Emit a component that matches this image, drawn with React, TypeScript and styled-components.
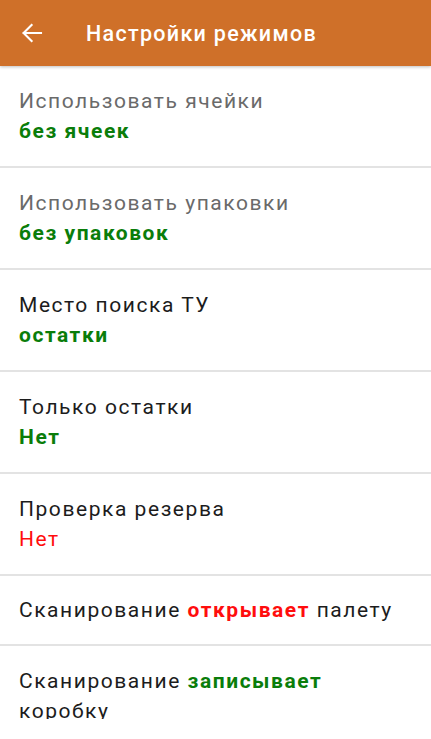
import { FC } from 'react';
import styled, { createGlobalStyle } from 'styled-components';

type Tone = 'green' | 'greenBold' | 'red';

type Setting = {
  label: string;
  value: string;
  tone: Tone;
  disabled?: boolean;
};

const settings: Setting[] = [
  { label: 'Использовать ячейки', value: 'без ячеек', tone: 'greenBold', disabled: true },
  { label: 'Использовать упаковки', value: 'без упаковок', tone: 'greenBold', disabled: true },
  { label: 'Место поиска ТУ', value: 'остатки', tone: 'greenBold' },
  { label: 'Только остатки', value: 'Нет', tone: 'greenBold' },
  { label: 'Проверка резерва', value: 'Нет', tone: 'red' },
];

const App: FC = () => {
  return (
    <>
      <GlobalStyle />
      <StyledScreen>
        <StyledToolbar>
          <StyledBackButton aria-label="Назад">
            <svg width="24" height="24" viewBox="0 0 24 24" fill="none">
              <path
                d="M21 12H3.6M11.6 4L3.6 12L11.6 20"
                stroke="#fff"
                strokeWidth="2.1"
                strokeLinecap="square"
              />
            </svg>
          </StyledBackButton>
          <StyledTitle>Настройки режимов</StyledTitle>
        </StyledToolbar>

        <StyledList>
          {settings.map((item) => (
            <StyledRow key={item.label}>
              <StyledLabel $disabled={item.disabled}>{item.label}</StyledLabel>
              <StyledValue $tone={item.tone}>{item.value}</StyledValue>
            </StyledRow>
          ))}
          <StyledRow $compact>
            <StyledLabel>
              Сканирование <StyledInline $tone="red">открывает</StyledInline> палету
            </StyledLabel>
          </StyledRow>
          <StyledRow>
            <StyledLabel>
              Сканирование <StyledInline $tone="green">записывает</StyledInline> коробку
            </StyledLabel>
          </StyledRow>
        </StyledList>
      </StyledScreen>
    </>
  );
};

export default App;

const GlobalStyle = createGlobalStyle`
  html, body {
    margin: 0;
    padding: 0;
    background: #fff;
  }
  body {
    font-family: Roboto, 'Noto Sans', 'Liberation Sans', sans-serif;
  }
`;

const StyledScreen = styled.div`
  width: 431px;
  height: 719px;
  overflow: hidden;
  display: flex;
  flex-direction: column;
  background: #fff;
`;

const StyledToolbar = styled.header`
  position: relative;
  z-index: 1;
  flex: 0 0 66px;
  display: flex;
  align-items: center;
  background: #cf7029;
  box-shadow: 0 1px 3px rgba(0, 0, 0, 0.25);
`;

const StyledBackButton = styled.button`
  display: flex;
  align-items: center;
  justify-content: center;
  width: 24px;
  height: 24px;
  margin-left: 20px;
  padding: 0;
  border: 0;
  background: none;
`;

const StyledTitle = styled.h1`
  margin: 0 0 0 42px;
  color: #fff;
  font-size: 21.5px;
  font-weight: 500;
  letter-spacing: 1.3px;
`;

const StyledList = styled.ul`
  flex: 0 0 auto;
  margin: 0;
  padding: 0;
  list-style: none;
`;

const StyledRow = styled.li<{ $compact?: boolean }>`
  padding: ${({ $compact }) => ($compact ? '19px' : '20px')} 19px;
  border-bottom: 2px solid #e3e3e3;
  font-size: 21px;
  line-height: 30px;
  letter-spacing: 1.55px;
`;

const StyledLabel = styled.div<{ $disabled?: boolean }>`
  color: ${({ $disabled }) => ($disabled ? '#6a6a6a' : '#1c1c1c')};
`;

const toneColor = (tone: Tone) => (tone === 'red' ? '#ff0d0d' : '#0a7d0a');

const StyledValue = styled.div<{ $tone: Tone }>`
  color: ${({ $tone }) => toneColor($tone)};
  font-weight: ${({ $tone }) => ($tone === 'red' ? 400 : 700)};
`;

const StyledInline = styled.span<{ $tone: Tone }>`
  color: ${({ $tone }) => toneColor($tone)};
  font-weight: 700;
`;
